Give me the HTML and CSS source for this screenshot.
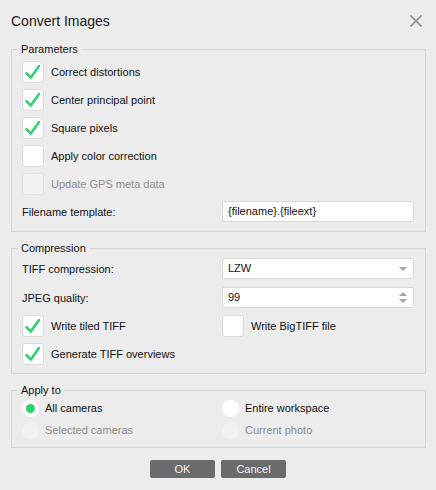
FILE: index.html
```html
<!DOCTYPE html>
<html>
<head>
<meta charset="utf-8">
<link rel="stylesheet" href="styles.css">
</head>
<body>
<div class="dialog">
  <div class="titlebar">
    <span class="title">Convert Images</span>
    <svg class="close" width="14" height="14" viewBox="0 0 14 14"><path d="M1.5 1.5 L12.5 12.5 M12.5 1.5 L1.5 12.5" stroke="#8a8a8a" stroke-width="1.6" fill="none"/></svg>
  </div>

  <fieldset class="group group-params">
    <legend>Parameters</legend>
    <div class="stack">
      <label class="check"><span class="box on"><svg width="22" height="22" viewBox="0 0 22 22"><path d="M4.5 12.2 L8.8 16.6 L17 5" stroke="#2fd16f" stroke-width="2.6" fill="none" stroke-linecap="round" stroke-linejoin="round"/></svg></span>Correct distortions</label>
      <label class="check"><span class="box on"><svg width="22" height="22" viewBox="0 0 22 22"><path d="M4.5 12.2 L8.8 16.6 L17 5" stroke="#2fd16f" stroke-width="2.6" fill="none" stroke-linecap="round" stroke-linejoin="round"/></svg></span>Center principal point</label>
      <label class="check"><span class="box on"><svg width="22" height="22" viewBox="0 0 22 22"><path d="M4.5 12.2 L8.8 16.6 L17 5" stroke="#2fd16f" stroke-width="2.6" fill="none" stroke-linecap="round" stroke-linejoin="round"/></svg></span>Square pixels</label>
      <label class="check"><span class="box"></span>Apply color correction</label>
      <label class="check disabled"><span class="box"></span>Update GPS meta data</label>
      <div class="form-row">
        <span class="label">Filename template:</span>
        <div class="field">{filename}.{fileext}</div>
      </div>
    </div>
  </fieldset>

  <fieldset class="group group-comp">
    <legend>Compression</legend>
    <div class="stack">
      <div class="form-row">
        <span class="label">TIFF compression:</span>
        <div class="field select">LZW<span class="arrow-down"></span></div>
      </div>
      <div class="form-row row-jpeg">
        <span class="label">JPEG quality:</span>
        <div class="field spin">99<span class="spin-arrows"><span class="arrow-up"></span><span class="arrow-down"></span></span></div>
      </div>
      <div class="form-row row-checks">
        <label class="check"><span class="box on"><svg width="22" height="22" viewBox="0 0 22 22"><path d="M4.5 12.2 L8.8 16.6 L17 5" stroke="#2fd16f" stroke-width="2.6" fill="none" stroke-linecap="round" stroke-linejoin="round"/></svg></span>Write tiled TIFF</label>
        <label class="check"><span class="box"></span>Write BigTIFF file</label>
      </div>
      <label class="check"><span class="box on"><svg width="22" height="22" viewBox="0 0 22 22"><path d="M4.5 12.2 L8.8 16.6 L17 5" stroke="#2fd16f" stroke-width="2.6" fill="none" stroke-linecap="round" stroke-linejoin="round"/></svg></span>Generate TIFF overviews</label>
    </div>
  </fieldset>

  <fieldset class="group group-apply">
    <legend>Apply to</legend>
    <div class="radio-grid">
      <label class="radio"><span class="dot on"></span>All cameras</label>
      <label class="radio"><span class="dot"></span>Entire workspace</label>
      <label class="radio disabled"><span class="dot"></span>Selected cameras</label>
      <label class="radio disabled"><span class="dot"></span>Current photo</label>
    </div>
  </fieldset>

  <div class="buttons">
    <button class="btn">OK</button>
    <button class="btn">Cancel</button>
  </div>
</div>
</body>
</html>
```

FILE: styles.css
```css
html, body {
  margin: 0;
  padding: 0;
  background: #ececec;
}
body {
  width: 436px;
  height: 490px;
  font-family: "Liberation Sans", Arial, sans-serif;
  font-size: 11px;
  color: #111;
}
.dialog {
  padding: 0 10px 0 11px;
}
.titlebar {
  height: 42px;
  display: flex;
  align-items: center;
  justify-content: space-between;
}
.title {
  font-size: 14px;
  color: #1a1a1a;
  line-height: 42px;
}
.close {
  margin-right: 3px;
  margin-top: 0px;
}
.group {
  margin: 0;
  border: 1px solid #d6d6d6;
  padding: 5px 10px 9px 10px;
  min-width: 0;
}
.group legend {
  padding: 0 3px;
  margin-left: -4px;
  line-height: 14px;
  height: 14px;
  color: #111;
}
.group-comp {
  margin-top: 9px;
  padding-top: 3px;
  padding-bottom: 8px;
}
.group-apply {
  margin-top: 9px;
  padding-top: 1px;
  padding-bottom: 7px;
}
.stack {
  display: flex;
  flex-direction: column;
  gap: 6px;
}
.check {
  display: flex;
  align-items: center;
  gap: 7px;
  height: 22px;
}
.box {
  width: 20px;
  height: 20px;
  border: 1px solid #dadada;
  border-radius: 3px;
  background: #fff;
  display: block;
  position: relative;
  flex: none;
}
.box svg {
  display: block;
  margin: -1px 0 0 -1px;
}
.check.disabled {
  color: #8e8e8e;
}
.check.disabled .box {
  background: #f2f2f2;
  border-color: #e2e2e2;
}
.form-row {
  display: grid;
  grid-template-columns: 200px 192px;
  align-items: center;
}
.row-jpeg {
  margin-top: 2px;
}
.row-checks {
  margin-top: 1px;
}
.field {
  height: 19px;
  border: 1px solid #d8d8d8;
  border-radius: 2px;
  background: #fff;
  line-height: 19px;
  padding-left: 5px;
  position: relative;
  color: #111;
}
.arrow-down {
  position: absolute;
  right: 6px;
  top: 8px;
  width: 0;
  height: 0;
  border-left: 4px solid transparent;
  border-right: 4px solid transparent;
  border-top: 4px solid #a3a3a3;
}
.arrow-up {
  position: absolute;
  right: 6px;
  top: 4px;
  width: 0;
  height: 0;
  border-left: 4px solid transparent;
  border-right: 4px solid transparent;
  border-bottom: 4px solid #a3a3a3;
}
.spin .arrow-down {
  top: 11px;
}
.radio-grid {
  display: grid;
  grid-template-columns: 200px 192px;
  grid-auto-rows: 20px;
  row-gap: 2px;
}
.radio {
  display: flex;
  align-items: center;
  gap: 6px;
}
.dot {
  width: 17px;
  height: 17px;
  border-radius: 50%;
  background: #fff;
  display: flex;
  align-items: center;
  justify-content: center;
  flex: none;
}
.dot.on::after {
  content: "";
  width: 9px;
  height: 9px;
  border-radius: 50%;
  background: #2fd16f;
}
.radio.disabled {
  color: #8e8e8e;
}
.radio.disabled .dot {
  background: #f2f2f2;
}
.buttons {
  display: flex;
  justify-content: center;
  gap: 6px;
  margin-top: 12px;
  padding-right: 1px;
}
.btn {
  width: 65px;
  height: 18px;
  border: none;
  border-radius: 2px;
  background: #6b6b6b;
  color: #f4f4f4;
  font-family: "Liberation Sans", Arial, sans-serif;
  font-size: 11px;
  padding: 0;
}
```
